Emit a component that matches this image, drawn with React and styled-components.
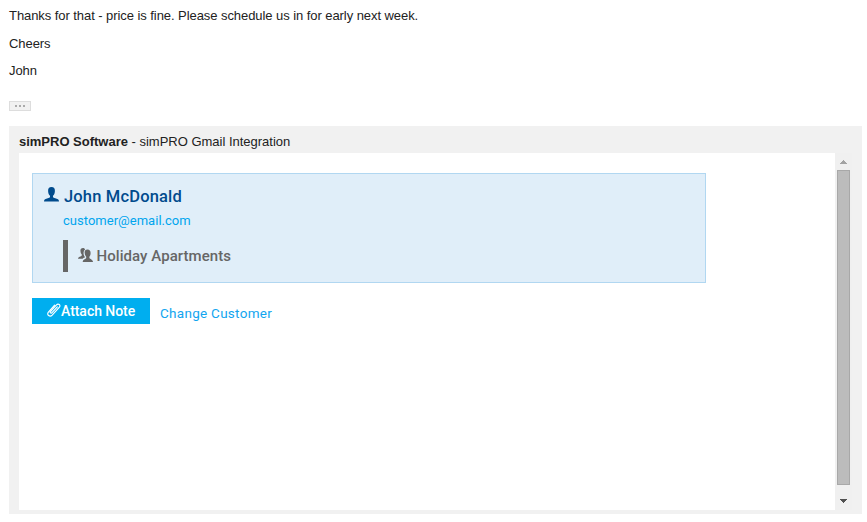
import React from 'react';
import styled, { createGlobalStyle } from 'styled-components';

const GlobalStyle = createGlobalStyle`
  * { box-sizing: border-box; }
  body { margin: 0; background: #fff; overflow: hidden; }
`;

const Page = styled.main`
  width: 867px;
  height: 522px;
  padding: 8px 5px 0 9px;
  font: 13px/16px "Liberation Sans", Arial, sans-serif;
  color: #222;
`;

const Message = styled.div`
  display: flex;
  flex-direction: column;
  height: 93px;
  gap: 11.5px;
  letter-spacing: -0.065px;
`;

const Line = styled.p`
  margin: 0;
  white-space: nowrap;
`;

const TrimmedToggle = styled.button`
  display: flex;
  align-items: center;
  justify-content: center;
  gap: 2px;
  width: 22px;
  height: 10px;
  margin: 0 0 15px;
  padding: 0;
  border: 1px solid #ddd;
  background: #f1f1f1;
`;

const Dot = styled.span`
  width: 2px;
  height: 2px;
  background: #aaa;
`;

const Gadget = styled.section`
  width: 853px;
  height: 388px;
  padding: 0 10px 4px;
  background: #f1f1f1;
`;

const GadgetTitle = styled.header`
  height: 27px;
  padding-top: 8px;
  letter-spacing: -0.01px;
  white-space: nowrap;
`;

const Viewport = styled.div`
  display: flex;
  height: 357px;
`;

const Content = styled.div`
  width: 816px;
  padding: 20px 13px;
  background: #fff;
  font-family: Roboto, sans-serif;
`;

const CustomerCard = styled.div`
  width: 674px;
  height: 110px;
  padding: 12px 0 0 11px;
  border: 1px solid #b1d7f1;
  background: #e0eef9;
`;

const NameRow = styled.div`
  display: flex;
  align-items: center;
  gap: 5px;
  height: 21px;
  color: #004b8d;
  font-size: 16.5px;
  font-weight: 500;
  letter-spacing: 0.17px;
  white-space: nowrap;
`;

const Email = styled.a`
  display: block;
  height: 16px;
  margin: 6px 0 0 19px;
  color: #00a5ee;
  letter-spacing: 0.02px;
`;

const Site = styled.div`
  display: flex;
  align-items: center;
  gap: 3.5px;
  width: 300px;
  height: 32px;
  margin: 11px 0 0 19px;
  padding-left: 10px;
  border-left: 5px solid #666;
  color: #666;
  font-size: 15px;
  font-weight: 500;
  letter-spacing: 0.06px;
`;

const Actions = styled.div`
  display: flex;
  gap: 10px;
  margin-top: 15px;
`;

const AttachButton = styled.button`
  display: flex;
  align-items: center;
  width: 118px;
  height: 26px;
  padding: 0 0 0 14px;
  border: 0;
  background: #00aeef;
  color: #fff;
  font: 500 14px/16px Roboto, sans-serif;
  letter-spacing: -0.04px;
  white-space: nowrap;
`;

const ChangeLink = styled.a`
  padding-top: 7px;
  color: #12a5ef;
  font-size: 13.5px;
  letter-spacing: 0.28px;
  white-space: nowrap;
`;

const Scrollbar = styled.div`
  display: flex;
  flex-direction: column;
  align-items: center;
  width: 17px;
  background: #f0f0f0;
`;

const Thumb = styled.div`
  width: 13px;
  height: 315px;
  border: 1px solid #a8a8a8;
  background: #bcbcbc;
`;

const Arrow = styled.svg`
  display: block;
  width: 17px;
  height: ${(p) => p.$height}px;
  fill: ${(p) => p.$color};
`;

const Icon = styled.svg`
  display: block;
  flex: none;
`;

const PersonIcon = () => (
  <Icon width="15" height="19" viewBox="0 0 15 19" fill="currentColor">
    <path d="M7.5 0C5.1 0 4 1.500 4.100 4c.05 2.300.8 3.900 1.900 4.800v1.200c-.3.7-1.100 1-2.200 1.300C1.600 11.900 0 12.200 0 14.600h15c0-2.400-1.600-2.700-3.800-3.300-1.100-.3-1.900-.6-2.200-1.300V8.800c1.100-.9 1.850-2.500 1.900-4.800C11 1.500 9.900 0 7.500 0Z" />
  </Icon>
);

const PeopleIcon = () => (
  <Icon width="15" height="16" viewBox="0 0 15 16" fill="currentColor">
    <path d="M5 0C3 .1 2.200 1.300 2.500 3.300c.1 1.500.6 2.500 1.300 3.200v1C3.200 8.500.3 8.600 0 10.700h4.600c.6-.8 1.900-1.100 2.500-1.500C5.700 7.800 5.200 5.400 5.800 3.400c.2-.8.7-1.500 1.300-1.900C6.700.5 6 0 5 0Z" />
    <path d="M9.300 1.500c-2 .1-2.900 1.400-2.600 3.600.1 1.700.7 2.800 1.500 3.600v1.400C7.600 11.300 5 11.400 4.700 14H15c-.2-2.500-2.900-2.700-3.600-3.900V8.700c.7-.8 1.200-1.900 1.200-3.500.1-2.400-1.100-3.800-3.300-3.700Z" />
  </Icon>
);

const ClipIcon = () => (
  <Icon width="15" height="16" viewBox="0 0.5 15 16" fill="none" stroke="currentColor" strokeWidth="1.15" strokeLinecap="round">
    <path d="M11.300 4.300 5.800 10.300c-.9 1-2.200-.2-1.300-1.200l6-6.700c1.800-1.900 4.600.2 2.900 2.300L6.200 12.700C3.900 15.100.2 12.300 2.400 9.700L8.600 2.700" />
  </Icon>
);

export default function App() {
  return (
    <Page>
      <GlobalStyle />
      <Message>
        <Line>Thanks for that - price is fine. Please schedule us in for early next week.</Line>
        <Line>Cheers</Line>
        <Line>John</Line>
      </Message>
      <TrimmedToggle aria-label="Show trimmed content">
        <Dot /><Dot /><Dot />
      </TrimmedToggle>
      <Gadget>
        <GadgetTitle><b>simPRO Software</b> - simPRO Gmail Integration</GadgetTitle>
        <Viewport>
          <Content>
            <CustomerCard>
              <NameRow><PersonIcon />John McDonald</NameRow>
              <Email>customer@email.com</Email>
              <Site><PeopleIcon />Holiday Apartments</Site>
            </CustomerCard>
            <Actions>
              <AttachButton><ClipIcon />Attach Note</AttachButton>
              <ChangeLink>Change Customer</ChangeLink>
            </Actions>
          </Content>
          <Scrollbar>
            <Arrow $height={17} $color="#a3a3a3" viewBox="0 0 17 17" shapeRendering="crispEdges">
              <path d="M8 7h1v1h1v1h1v1h1v1H5v-1h1V9h1V8h1Z" />
            </Arrow>
            <Thumb />
            <Arrow $height={25} $color="#505050" viewBox="0 0 17 25" shapeRendering="crispEdges">
              <path d="M5 14h7v1h-1v1h-1v1H9v1H8v-1H7v-1H6v-1H5Z" />
            </Arrow>
          </Scrollbar>
        </Viewport>
      </Gadget>
    </Page>
  );
}
